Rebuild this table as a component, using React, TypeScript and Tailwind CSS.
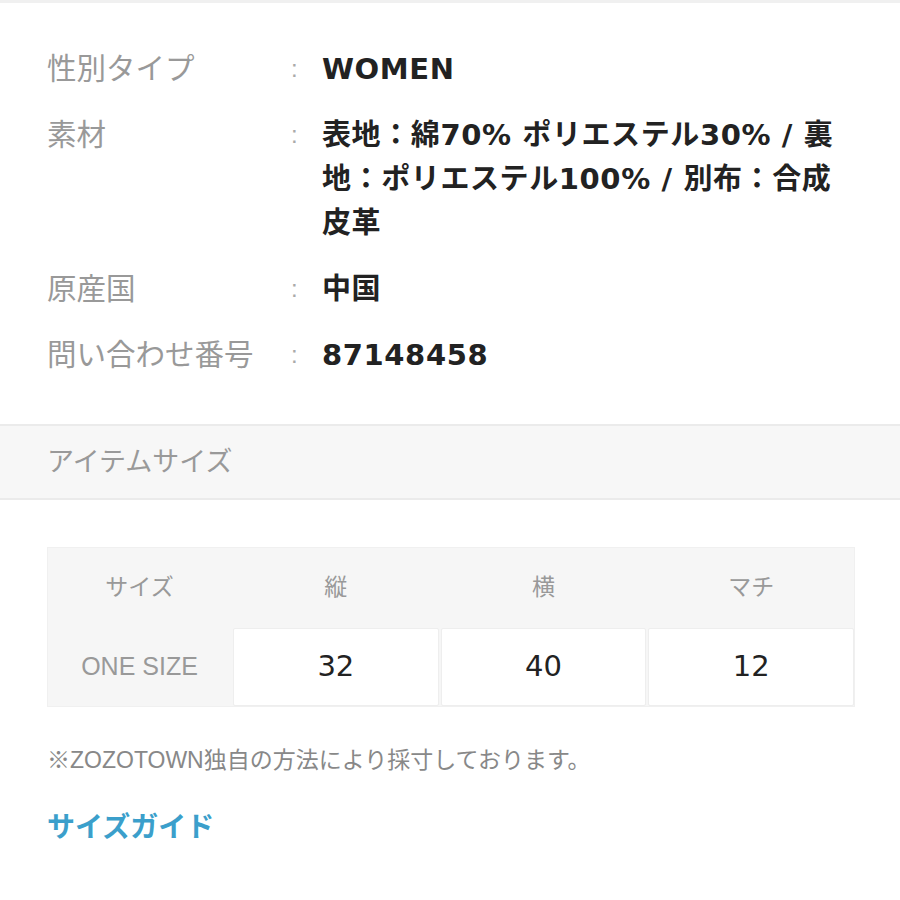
const font = { fontFamily: '"Liberation Sans", "Noto Sans CJK JP", sans-serif' };
const wide = { fontFamily: '"DejaVu Sans", "Noto Sans CJK JP", sans-serif' };

const specs = [
  { label: "性別タイプ", value: ["WOMEN"] },
  {
    label: "素材",
    value: [
      "表地：綿70% ポリエステル30% / 裏",
      "地：ポリエステル100% / 別布：合成",
      "皮革",
    ],
  },
  { label: "原産国", value: ["中国"] },
  { label: "問い合わせ番号", value: ["87148458"] },
];

const sizes = [
  { head: "縦", value: "32" },
  { head: "横", value: "40" },
  { head: "マチ", value: "12" },
];

export default function App() {
  return (
    <div
      className="w-[900px] h-[900px] bg-white overflow-hidden border-t-[3px] border-[#f0f0f0]"
      style={font}
    >
      <dl className="flex flex-col gap-[22px] pt-[44px] pl-[47px] pr-[40px]">
        {specs.map((s) => (
          <div key={s.label} className="flex leading-[44px]">
            <dt className="w-[244px] text-[29.5px] text-[#999]">{s.label}</dt>
            <span className="w-[31px] text-[24px] text-[#aaa]">:</span>
            <dd className="flex flex-col text-[29px] font-bold tracking-[0.6px] text-[#222]" style={wide}>
              {s.value.map((line) => (
                <span key={line} className="whitespace-nowrap">{line}</span>
              ))}
            </dd>
          </div>
        ))}
      </dl>

      <div className="mt-[47px] h-[76px] flex items-center pl-[47px] bg-[#f7f7f7] border-y-2 border-[#ebebeb]">
        <h2 className="text-[27px] text-[#999]">アイテムサイズ</h2>
      </div>

      <div className="mt-[47px] mx-[47px] w-[808px] grid grid-cols-[183px_1fr_1fr_1fr] gap-[2px] bg-[#f6f6f6] border border-[#f0f0f0]">
        <div className="h-[78px] flex items-center justify-center text-[23px] text-[#999]">サイズ</div>
        {sizes.map((c) => (
          <div key={c.head} className="h-[78px] flex items-center justify-center text-[23px] text-[#999]">
            {c.head}
          </div>
        ))}
        <div className="h-[78px] flex items-center justify-center text-[25px] text-[#999]">ONE SIZE</div>
        {sizes.map((c) => (
          <div
            key={c.value}
            className="h-[78px] flex items-center justify-center bg-white border border-[#eeeeee] rounded-[2px] text-[29px] text-[#222]"
            style={wide}
          >
            {c.value}
          </div>
        ))}
      </div>

      <p className="mt-[35px] pl-[47px] text-[23px] leading-[36px] text-[#888]">
        ※ZOZOTOWN独自の方法により採寸しております。
      </p>
      <a className="block mt-[30px] pl-[47px] text-[28px] leading-[40px] font-bold text-[#3b9fcb]">
        サイズガイド
      </a>
    </div>
  );
}
